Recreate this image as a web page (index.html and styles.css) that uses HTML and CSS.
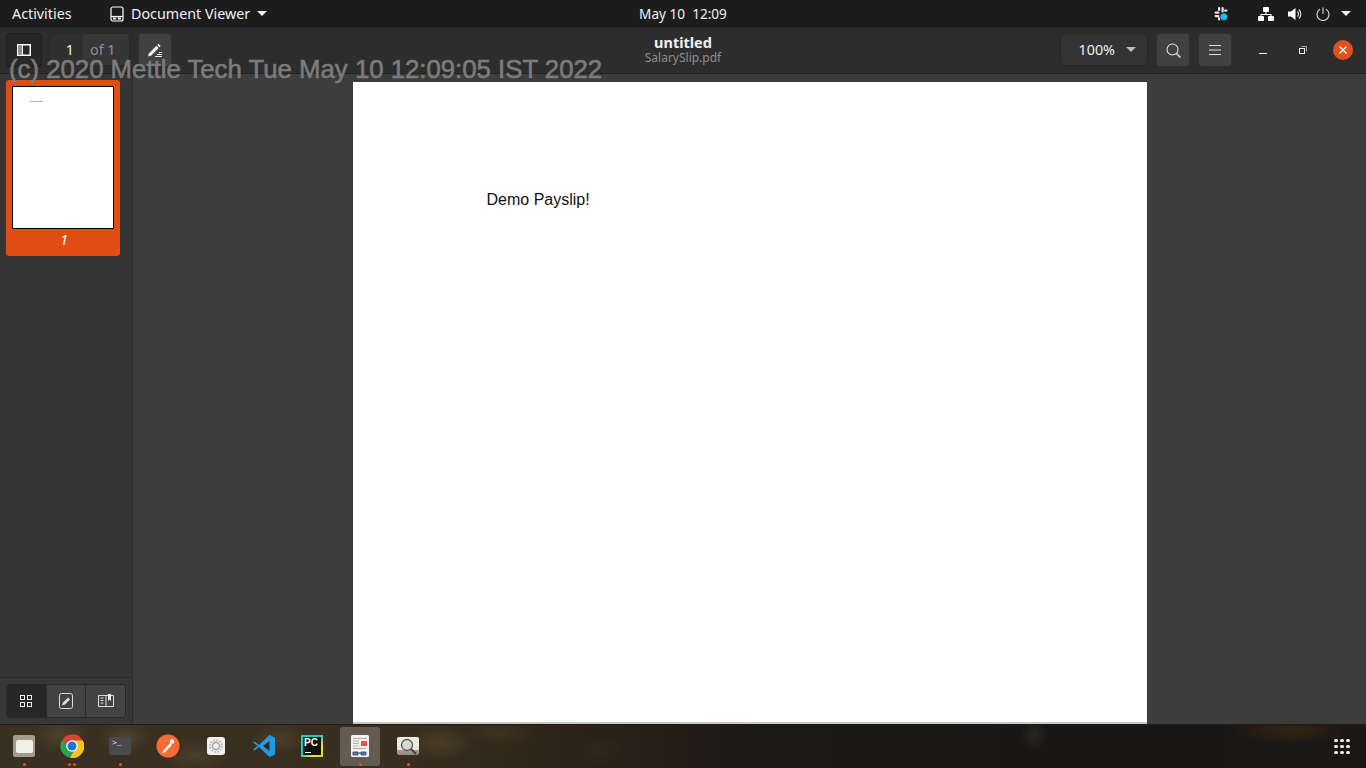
FILE: index.html
```html
<!DOCTYPE html>
<html lang="en">
<head>
<meta charset="utf-8">
<title>Document Viewer</title>
<link rel="stylesheet" href="styles.css">
</head>
<body>
<div class="screen">
  <header class="topbar">
    <div class="top-left">
      <span class="activities">Activities</span>
      <span class="app-menu">
        <svg class="app-icon" viewBox="0 0 14 16" width="14" height="16" fill="none" stroke="#fff" stroke-width="1.2"><rect x="1" y="1" width="12" height="14" rx="2"/><path d="M1 10.500h12"/><rect x="3" y="11.500" width="3.200" height="2" fill="#fff" stroke="none"/><rect x="7.800" y="11.500" width="3.200" height="2" fill="#fff" stroke="none"/></svg>
        <span>Document Viewer</span>
        <i class="caret caret-top"></i>
      </span>
    </div>
    <div class="clock">May 10&nbsp; 12:09</div>
    <div class="top-right">
      <svg class="tray-slack" viewBox="0 0 16 16" width="16" height="16"><g fill="#e8e8e8"><rect x="1.500" y="5.500" width="5" height="2.200" rx="1.100"/><rect x="5" y="1" width="2.200" height="4" rx="1.100"/><rect x="8.500" y="1" width="2.200" height="5.500" rx="1.100"/><rect x="1.500" y="9" width="5" height="2.200" rx="1.100"/><rect x="5" y="11" width="2.200" height="3.500" rx="1.100"/><rect x="11" y="3.500" width="3.500" height="2.200" rx="1.100"/></g><circle cx="10.800" cy="10.800" r="3.900" fill="#12c4ee" stroke="#222" stroke-width=".8"/></svg>
      <svg class="tray-net" viewBox="0 0 16 14" width="16" height="14" fill="#fff"><rect x="5" y="0" width="6" height="5" rx="1"/><rect x="0" y="9" width="6" height="5" rx="1"/><rect x="10" y="9" width="6" height="5" rx="1"/><path d="M7.500 5h1v2h5v2h-1V8h-9v1h-1V7h5z"/></svg>
      <svg class="tray-vol" viewBox="0 0 16 14" width="16" height="14" fill="none"><path d="M0 4.500h3L7.500 1v12L3 9.500H0z" fill="#fff"/><path d="M9.500 4.500a3.500 3.500 0 0 1 0 5M11 2.500a6.500 6.500 0 0 1 0 9" stroke="#ddd" stroke-width="1.100"/></svg>
      <svg class="tray-power" viewBox="0 0 14 14" width="14" height="14" fill="none" stroke="#ddd" stroke-width="1.100"><path d="M7 .5v6.500"/><path d="M4 2.300a6 6 0 1 0 6 0"/></svg>
      <i class="caret caret-top"></i>
    </div>
  </header>

  <div class="headerbar">
    <div class="hb-left">
      <button class="btn btn-dark btn-square">
        <svg viewBox="0 0 14 12" width="14" height="12"><path d="M0 0h14v12H0zM1.500 1.500v9h3v-9zM6 1.500v9h6.500v-9z" fill="#fff" fill-rule="evenodd"/><rect x="1.500" y="1.500" width="3" height="9" fill="#8e8e8e"/></svg>
      </button>
      <div class="page-entry"><span class="page-num">1</span><span class="page-of">of 1</span></div>
      <button class="btn btn-square btn-light">
        <svg viewBox="0 0 16 14" width="16" height="14" fill="#eee"><path d="M1 13.500l.8-3L9.500 2.800 11.700 5 4 12.700z"/><path d="M10.300 2l1.200-1.200 2.200 2.200-1.200 1.200z"/><path d="M8 13h7v1H8zM10 11h5v1h-5zM12 9h3v1h-3z"/></svg>
      </button>
    </div>
    <div class="title-block">
      <div class="title">untitled</div>
      <div class="subtitle">SalarySlip.pdf</div>
    </div>
    <div class="hb-right">
      <div class="zoom-box"><span>100%</span><i class="caret caret-grey"></i></div>
      <button class="btn btn-square btn-light">
        <svg viewBox="0 0 15 15" width="15" height="15" fill="none" stroke="#ddd" stroke-width="1.100"><circle cx="6.500" cy="6.500" r="5.500"/><path d="M10.500 10.500l4 4" stroke-width="1.500"/></svg>
      </button>
      <button class="btn btn-square btn-light">
        <svg viewBox="0 0 12 10" width="12" height="10" fill="#ddd"><rect width="12" height="1"/><rect y="4.500" width="12" height="1"/><rect y="9" width="12" height="1"/></svg>
      </button>
      <div class="win-controls">
        <span class="win-btn"><svg viewBox="0 0 8 8" width="8" height="8"><rect y="7" width="8" height="1" fill="#eee"/></svg></span>
        <span class="win-btn"><svg viewBox="0 0 8 8" width="8" height="8" fill="none" stroke="#eee"><rect x=".5" y="2.500" width="5" height="5"/><path d="M2.500 .5h5v5" stroke="#aaa"/></svg></span>
        <span class="win-btn win-close"><svg viewBox="0 0 8 8" width="8" height="8" stroke="#fff" stroke-width="1.300"><path d="M.5.5l7 7M7.500.5l-7 7"/></svg></span>
      </div>
    </div>
  </div>

  <div class="workspace">
    <aside class="sidebar">
      <div class="thumb-area">
        <div class="thumb-card">
          <div class="thumb-page"><span class="thumb-text">Demo Payslip!</span></div>
          <div class="thumb-label">1</div>
        </div>
      </div>
      <div class="side-footer">
        <div class="seg">
          <span class="seg-btn seg-active">
            <svg viewBox="0 0 12 12" width="12" height="12" fill="none" stroke="#eee"><rect x=".5" y=".5" width="4" height="4"/><rect x="7.500" y=".5" width="4" height="4"/><rect x=".5" y="7.500" width="4" height="4"/><rect x="7.500" y="7.500" width="4" height="4"/></svg>
          </span>
          <span class="seg-btn">
            <svg viewBox="0 0 14 16" width="14" height="16" fill="none" stroke="#ddd"><rect x=".5" y=".5" width="13" height="15" rx="2"/><path d="M3 12.500l1-3L9 4.500l2 2-5 5z" fill="#ddd" stroke="none"/></svg>
          </span>
          <span class="seg-btn">
            <svg viewBox="0 0 16 14" width="16" height="14" fill="none" stroke="#ddd"><path d="M.5 1.500h15v11H.5z"/><path d="M2.500 4h3M2.500 6.500h3M2.500 9h3M8 1.500v11"/><path d="M10 0h3v7l-1.500-1.500L10 7z" fill="#eee" stroke="none"/></svg>
          </span>
        </div>
      </div>
    </aside>
    <main class="viewer">
      <div class="page"><p class="page-text">Demo Payslip!</p></div>
    </main>
  </div>

  <nav class="dock">
    <div class="dock-item">
      <span class="ico ico-files"><span class="folder"></span></span>
      <span class="dots"><i></i></span>
    </div>
    <div class="dock-item">
      <svg class="ico-svg" viewBox="0 0 24 24" width="24" height="24"><path d="M12 12L2 7a11.500 11.500 0 0 1 20.800-.3z" fill="#dd4335"/><path d="M1.800 6.600A11.800 11.800 0 0 0 10 23.800L15 14z" fill="#2ca24d"/><path d="M22.800 6.500H12l3.500 7L10 23.800A11.800 11.800 0 0 0 22.800 6.500z" fill="#fbc21a"/><circle cx="12" cy="12" r="5.800" fill="#fff"/><circle cx="12" cy="12" r="4.500" fill="#1a73e8"/></svg>
      <span class="dots"><i></i><i></i></span>
    </div>
    <div class="dock-item">
      <span class="ico ico-term">&gt;_</span>
      <span class="dots"><i></i></span>
    </div>
    <div class="dock-item">
      <svg class="ico-svg" viewBox="0 0 24 24" width="24" height="24"><circle cx="12" cy="12" r="11.500" fill="#fb6a32"/><path d="M6 19l1-2 7-8 2 1.700-7.300 7.800z" fill="#fff"/><circle cx="16" cy="7.500" r="2.200" fill="#fff"/></svg>
      <span class="dots"></span>
    </div>
    <div class="dock-item">
      <span class="ico ico-white">
        <svg viewBox="0 0 14 14" width="14" height="14" fill="none" stroke="#aaa" stroke-width="1.600"><circle cx="7" cy="7" r="3.600"/><circle cx="7" cy="7" r="6" stroke-dasharray="1.600 1.500" stroke-width="1.400"/></svg>
      </span>
      <span class="dots"></span>
    </div>
    <div class="dock-item">
      <svg class="ico-svg" viewBox="0 0 24 24" width="24" height="24"><path d="M17.500 1L23 3.500v17L17.500 23 7 13l-4.500 3.500L1 15.500 5.500 12 1 8.500l1.500-1L7 11z" fill="#1f9ce8"/><path d="M17.500 7L11 12l6.500 5z" fill="#32281c"/></svg>
      <span class="dots"></span>
    </div>
    <div class="dock-item">
      <span class="ico ico-pc"><span class="pc-inner">PC<u></u></span></span>
      <span class="dots"></span>
    </div>
    <div class="dock-item dock-active">
      <span class="ico ico-doc">
        <svg viewBox="0 0 18 22" width="18" height="22"><rect width="18" height="22" rx="1.500" fill="#f2f2f2"/><path d="M2 3.500h14M2 6h6M2 8.500h6M2 11h6M2 13.500h13" stroke="#b5a996" stroke-width="1"/><rect x="10" y="6" width="6" height="5" fill="#e5524a"/><path d="M2 17h5v3H2zM10 17h5v3h-5z" fill="#5d7fb0" stroke="#30405c" stroke-width=".8"/><path d="M7 18h3" stroke="#30405c"/></svg>
      </span>
      <span class="dots"><i></i></span>
    </div>
    <div class="dock-item">
      <span class="ico ico-shot">
        <svg viewBox="0 0 22 18" width="22" height="18" fill="none"><circle cx="10" cy="8" r="5.500" fill="#d8d8d0" stroke="#555" stroke-width="1.300"/><path d="M14 12l5 5" stroke="#444" stroke-width="2"/></svg>
      </span>
      <span class="dots"><i></i></span>
    </div>
    <div class="dock-spacer"></div>
    <div class="apps-grid"><i></i><i></i><i></i><i></i><i></i><i></i><i></i><i></i><i></i></div>
  </nav>

  <div class="watermark">(c) 2020 Mettle Tech Tue May 10 12:09:05 IST 2022</div>
</div>
</body>
</html>
```
FILE: styles.css
```css
* { box-sizing: border-box; }
html, body { margin: 0; padding: 0; height: 100%; background: #1d1d1d; }
.screen {
  position: relative;
  width: 1366px;
  height: 768px;
  overflow: hidden;
  display: flex;
  flex-direction: column;
  font-family: "Noto Sans", "Open Sans", sans-serif;
  color: #eee;
}

/* top bar */
.topbar {
  height: 27px;
  flex: none;
  background: #1c1c1c;
  display: grid;
  grid-template-columns: 1fr auto 1fr;
  align-items: center;
  font-size: 14.300px;
  color: #f0f0f0;
}
.top-left { display: flex; align-items: center; padding-left: 12px; }
.activities { width: 98px; }
.app-menu { display: flex; align-items: center; gap: 7px; }
.app-icon { flex: none; }
.caret { display: block; width: 0; height: 0; border-left: 5px solid transparent; border-right: 5px solid transparent; border-top: 5px solid #eee; }
.clock { font-size: 13.600px; }
.top-right { display: flex; align-items: center; justify-content: flex-end; padding-right: 15px; }
.tray-slack { margin-right: 29px; }
.tray-net { margin-right: 14px; }
.tray-vol { margin-right: 12px; }
.tray-power { margin-right: 11px; }

/* header bar */
.headerbar {
  height: 47px;
  flex: none;
  background: #2d2d2d;
  border-top: 1px solid #262626;
  border-bottom: 1px solid #222;
  display: grid;
  grid-template-columns: 1fr auto 1fr;
  align-items: start;
  padding-top: 5px;
}
.hb-left { display: flex; gap: 7px; padding-left: 6px; align-items: flex-start; }
.hb-right { display: flex; justify-content: flex-end; gap: 8px; align-items: flex-start; }
.btn {
  display: flex;
  align-items: center;
  justify-content: center;
  padding: 0;
  border-radius: 4px;
  border: 1px solid #262626;
  background: #3c3c3c;
}
.btn-square { width: 34px; height: 34px; }
.btn-dark { width: 36px; background: #272727; border-color: #1f1f1f; }
.btn-light { background: #414141; border-color: #303030; }
.page-entry {
  width: 81px;
  height: 33px;
  display: flex;
  border-radius: 4px;
  border: 1px solid #292929;
  background: #333;
  font-size: 14.300px;
  overflow: hidden;
  margin-right: 1px;
}
.page-num { width: 32px; padding-right: 7px; text-align: right; line-height: 31px; background: #2f2f2f; border-right: 1px solid #2a2a2a; color: #eee; }
.page-of { flex: 1; padding-left: 8px; line-height: 31px; color: #8f8f8f; background: #363636; }
.title-block { text-align: center; margin-top: 1px; }
.title { font-size: 14.500px; font-weight: 700; line-height: 16px; color: #f2f2f2; }
.subtitle { font-size: 12px; line-height: 16px; color: #8e8e8e; }
.zoom-box {
  width: 88px;
  height: 33px;
  display: flex;
  align-items: center;
  justify-content: flex-end;
  gap: 11px;
  padding-right: 11px;
  background: #333;
  border: 1px solid #292929;
  border-radius: 4px;
  font-size: 14.300px;
  color: #eee;
}
.caret-grey { border-top-color: #bbb; }
.win-controls { display: flex; align-items: center; height: 34px; gap: 20px; padding-left: 13px; padding-right: 13px; }
.win-btn { width: 20px; height: 20px; display: flex; align-items: center; justify-content: center; }
.win-close { background: #e2501c; border-radius: 50%; }

/* workspace */
.workspace { flex: 1; min-height: 0; display: flex; }
.sidebar {
  width: 133px;
  flex: none;
  background: #353535;
  border-right: 1px solid #2a2a2a;
  display: flex;
  flex-direction: column;
}
.thumb-area { flex: 1; padding: 6px 0 0 6px; }
.thumb-card {
  width: 114px;
  height: 176px;
  background: #e24d14;
  border-radius: 3px;
  padding: 6px 6px 0;
}
.thumb-page {
  display: block;
  height: 143px;
  background: #fff;
  border: 1px solid #000;
  padding: 13px 0 0 17px;
}
.thumb-text { display: block; font-family: "Liberation Sans", sans-serif; font-size: 2px; line-height: 3px; color: #000; }
.thumb-label { text-align: center; padding-left: 2px; font-size: 14px; font-style: italic; color: #fff; line-height: 22px; }
.side-footer {
  height: 47px;
  flex: none;
  border-top: 1px solid #2a2a2a;
  background: #373737;
  padding: 6px 6px 0;
}
.seg {
  width: 120px;
  height: 34px;
  display: flex;
  border: 1px solid #282828;
  border-radius: 4px;
  overflow: hidden;
}
.seg-btn { flex: 1; display: flex; align-items: center; justify-content: center; background: #434343; border-left: 1px solid #2c2c2c; }
.seg-btn.seg-active { background: #272727; border-left: 0; }
.viewer { flex: 1; background: #3d3d3d; display: flex; justify-content: center; padding: 8px 0 0; overflow: hidden; }
.page {
  width: 794px;
  height: 642px;
  flex: none;
  background: #fff;
  border-bottom: 2px solid #c8c8c8;
  padding: 108px 0 0 134px;
}
.page-text { margin: 0; font-family: "Liberation Sans", sans-serif; font-size: 16px; line-height: 19px; color: #111; }

/* dock */
.dock {
  height: 44px;
  flex: none;
  display: flex;
  align-items: stretch;
  border-top: 1px solid #1e1c18;
  background:
    radial-gradient(ellipse 26px 16px at 125px 12px, rgba(120,105,75,.35), transparent),
    radial-gradient(ellipse 30px 18px at 60px 10px, rgba(105,90,60,.4), transparent),
    radial-gradient(ellipse 34px 18px at 195px 30px, rgba(100,85,55,.4), transparent),
    radial-gradient(ellipse 30px 16px at 280px 14px, rgba(105,85,50,.4), transparent),
    radial-gradient(ellipse 36px 18px at 440px 18px, rgba(105,85,50,.4), transparent),
    radial-gradient(ellipse 36px 14px at 500px 8px, rgba(90,70,40,.35), transparent),
    radial-gradient(ellipse 24px 16px at 600px 26px, rgba(60,48,34,.4), transparent),
    radial-gradient(ellipse 14px 16px at 1034px 10px, rgba(70,66,56,.35), transparent),
    radial-gradient(ellipse 60px 14px at 1290px 5px, rgba(80,50,20,.5), transparent),
    linear-gradient(90deg, #3a3022 0, #382d1f 30%, #2c2418 42%, #1c1915 55%, #181715 75%, #1a1714 100%);
}
.dock-item {
  position: relative;
  width: 48px;
  flex: none;
  display: flex;
  align-items: center;
  justify-content: center;
  padding-bottom: 1px;
}
.dock-active::before {
  content: "";
  position: absolute;
  left: 4px;
  right: 4px;
  top: 2px;
  bottom: 2px;
  background: rgba(255,255,255,.22);
  border-radius: 3px;
}
.ico, .ico-svg { position: relative; }
.ico { display: flex; align-items: center; justify-content: center; }
.ico-files { width: 22px; height: 22px; border-radius: 2px; background: #a59c8a; }
.folder { display: block; width: 17px; height: 13px; background: #f2efe9; border-radius: 2px; }
.ico-term {
  width: 22px;
  height: 18px;
  background: #4a4a4a;
  border-radius: 2px;
  color: #eee;
  font: 8px/12px "Liberation Mono", monospace;
  justify-content: flex-start;
  align-items: flex-start;
  padding-left: 3px;
}
.ico-white { width: 18px; height: 18px; background: #f0f0f0; border-radius: 3px; }
.ico-pc {
  width: 22px;
  height: 22px;
  background: linear-gradient(135deg, #19d68f 0, #19c9d6 45%, #f7e03c 75%, #c8d83a 100%);
  padding: 2px;
}
.pc-inner {
  position: relative;
  display: block;
  width: 18px;
  height: 18px;
  background: #111;
  color: #fff;
  font: 700 10px/12px "Liberation Sans", sans-serif;
  padding-left: 1px;
}
.pc-inner u { position: absolute; left: 2px; bottom: 2px; width: 6px; height: 1px; background: #fff; }
.ico-doc { width: 18px; height: 22px; }
.ico-shot { width: 22px; height: 18px; background: linear-gradient(#f2efe8 0, #e6e2d8 70%, #a9a396 70%, #8e897e 100%); border-radius: 2px; }
.dots { position: absolute; left: 0; right: 0; bottom: 2px; height: 3px; display: flex; justify-content: center; gap: 2px; }
.dots i { display: block; width: 3px; height: 3px; border-radius: 50%; background: #e9541f; }
.dock-spacer { flex: 1; }
.apps-grid {
  width: 16px;
  align-self: center;
  margin-right: 16px;
  display: grid;
  grid-template-columns: repeat(3, 4px);
  grid-auto-rows: 4px;
  gap: 2px;
}
.apps-grid i { display: block; width: 3.500px; height: 3.500px; border-radius: 50%; background: #eee; }

/* watermark laid over the window */
.watermark {
  position: absolute;
  left: 9px;
  top: 55px;
  font-family: "Liberation Sans", sans-serif;
  font-size: 25.750px;
  line-height: 29px;
  color: #7c7c7c;
  -webkit-text-stroke: .6px #7c7c7c;
  white-space: nowrap;
}
```
